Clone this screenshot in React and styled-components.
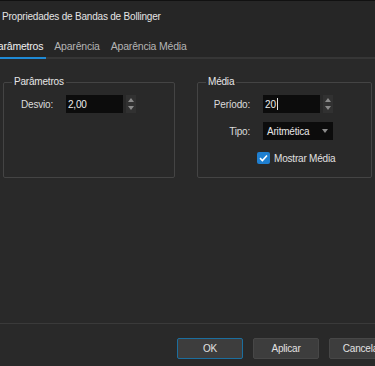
import React from 'react';
import styled, { createGlobalStyle } from 'styled-components';

const GlobalStyle = createGlobalStyle`
  body {
    margin: 0;
    background: #292929;
    font-family: 'Liberation Sans', Arial, sans-serif;
    font-size: 10px;
    letter-spacing: -0.2px;
    color: #dcdcdc;
  }
`;

const Dialog = styled.div`
  width: 375px;
  height: 366px;
  display: flex;
  flex-direction: column;
  overflow: hidden;
  background: #292929;
`;

const TitleBar = styled.div`
  height: 32px;
  display: flex;
  align-items: center;
  padding: 0 0 1px 2px;
  border-top: 1px solid #111;
  box-sizing: border-box;
  background: #262626;
  color: #e4e4e4;
`;

const TabBar = styled.div`
  height: 25px;
  display: flex;
  align-items: stretch;
  gap: 5px;
  margin-left: -12px;
  background: #262626;
  border-bottom: 2px solid #363636;
`;

const Tab = styled.div`
  display: flex;
  align-items: center;
  padding: 2px 3px 0;
  font-size: 10.5px;
  color: ${(p) => (p.$active ? '#f0f0f0' : '#b4b4b4')};
  border-bottom: 2px solid ${(p) => (p.$active ? '#1f8ad6' : 'transparent')};
  margin-bottom: -2px;
`;

const Content = styled.div`
  flex: 1;
  display: flex;
  align-items: flex-start;
  gap: 22px;
  padding: 16px 3px 0 3px;
`;

const Group = styled.fieldset`
  margin: 0;
  width: ${(p) => p.$width}px;
  height: 103px;
  box-sizing: border-box;
  border: 1px solid #444;
  border-radius: 2px;
  padding: 6px 0 0 0;
`;

const Legend = styled.legend`
  margin-left: 8px;
  padding: 0 2px;
  line-height: 14px;
  color: #e6e6e6;
`;

const Form = styled.div`
  display: grid;
  grid-template-columns: ${(p) => p.$labelWidth}px auto;
  grid-auto-rows: 18px;
  column-gap: 13px;
  row-gap: 9px;
  align-items: center;
`;

const Label = styled.span`
  text-align: right;
  color: #dcdcdc;
`;

const FieldRow = styled.div`
  display: flex;
  align-items: center;
  gap: 3px;
`;

const Input = styled.div`
  width: 57px;
  height: 18px;
  box-sizing: border-box;
  background: #0c0c0c;
  display: flex;
  align-items: center;
  padding-left: 2px;
  color: #ececec;
`;

const Caret = styled.span`
  display: inline-block;
  width: 1px;
  height: 12px;
  background: #e0e0e0;
  margin-left: 1px;
`;

const Spinner = styled.div`
  width: 10px;
  height: 18px;
  background: #313131;
  display: flex;
  flex-direction: column;
  align-items: center;
  justify-content: center;
  gap: 4px;
`;

const Arrow = styled.span`
  width: 0;
  height: 0;
  border-left: 3.5px solid transparent;
  border-right: 3.5px solid transparent;
  ${(p) =>
    p.$down
      ? 'border-top: 4px solid #8a8a8a;'
      : 'border-bottom: 4px solid #8a8a8a;'}
`;

const Combo = styled.div`
  width: 70px;
  height: 18px;
  box-sizing: border-box;
  background: #0c0c0c;
  display: flex;
  align-items: center;
  justify-content: space-between;
  padding: 0 5px 0 4px;
  color: #e6e6e6;
`;

const CheckRow = styled.label`
  grid-column: 2;
  margin-left: -6px;
  display: flex;
  align-items: center;
  gap: 4px;
  color: #e0e0e0;
`;

const Box = styled.span`
  width: 13px;
  height: 12px;
  border-radius: 2px;
  background: #1f7fd0;
  display: flex;
  align-items: center;
  justify-content: center;
`;

const Footer = styled.div`
  height: 43px;
  border-top: 1px solid #3a3a3a;
  display: flex;
  gap: 10px;
  padding: 14px 0 0 177px;
  box-sizing: border-box;
`;

const Button = styled.div`
  flex: none;
  width: 66px;
  height: 21px;
  box-sizing: border-box;
  display: flex;
  align-items: center;
  justify-content: center;
  background: #3d3d3d;
  border: 1px solid ${(p) => (p.$primary ? '#1c6e9e' : '#474747')};
  border-radius: 2px;
  color: #e2e2e2;
`;

function SpinField({ value, caret }) {
  return (
    <FieldRow>
      <Input>
        {value}
        {caret && <Caret />}
      </Input>
      <Spinner>
        <Arrow />
        <Arrow $down />
      </Spinner>
    </FieldRow>
  );
}

export default function App() {
  return (
    <>
      <GlobalStyle />
      <Dialog>
        <TitleBar>Propriedades de Bandas de Bollinger</TitleBar>
        <TabBar>
          <Tab $active>Parâmetros</Tab>
          <Tab>Aparência</Tab>
          <Tab>Aparência Média</Tab>
        </TabBar>
        <Content>
          <Group $width={173}>
            <Legend>Parâmetros</Legend>
            <Form $labelWidth={49}>
              <Label>Desvio:</Label>
              <SpinField value="2,00" />
            </Form>
          </Group>
          <Group $width={176}>
            <Legend>Média</Legend>
            <Form $labelWidth={52}>
              <Label>Período:</Label>
              <SpinField value="20" caret />
              <Label>Tipo:</Label>
              <Combo>
                Aritmética
                <Arrow $down />
              </Combo>
              <CheckRow>
                <Box>
                  <svg width="9" height="8" viewBox="0 0 9 8">
                    <path d="M1 4.2 L3.4 6.5 L8 1.5" fill="none" stroke="#fff" strokeWidth="1.6" />
                  </svg>
                </Box>
                Mostrar Média
              </CheckRow>
            </Form>
          </Group>
        </Content>
        <Footer>
          <Button $primary>OK</Button>
          <Button>Aplicar</Button>
          <Button>Cancelar</Button>
        </Footer>
      </Dialog>
    </>
  );
}
